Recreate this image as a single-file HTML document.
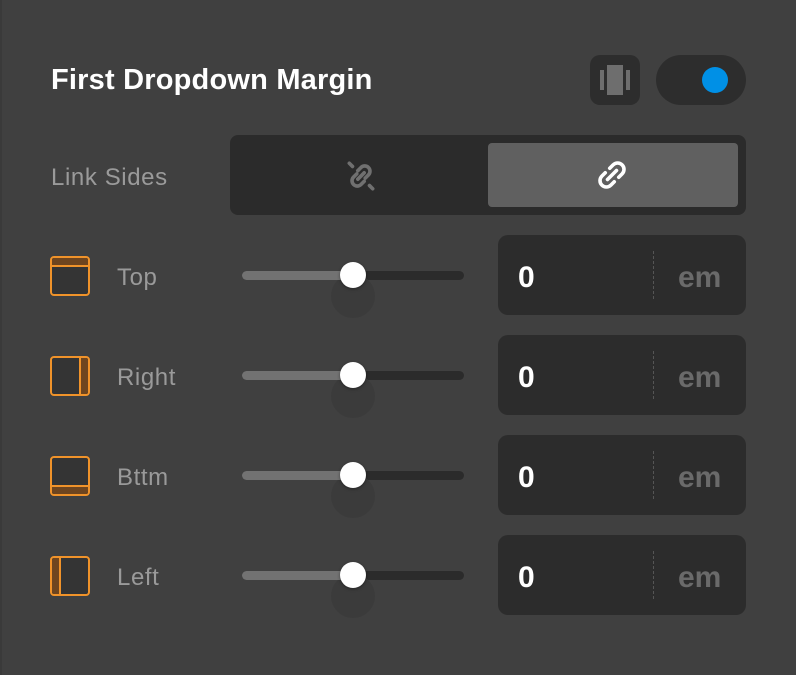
<!DOCTYPE html>
<html><head><style>
*{margin:0;padding:0;box-sizing:border-box}
body{width:796px;height:675px;background:#404040;font-family:"Liberation Sans",sans-serif;position:relative;overflow:hidden}
.a{position:absolute}
.title{left:51px;top:64px;font-size:29px;font-weight:bold;color:#fff;letter-spacing:0.2px}
.lbl{font-size:24px;color:#9a9a9a;letter-spacing:0.6px}
.track{left:242px;width:222px;height:9px;border-radius:5px;background:#2b2b2b}
.fill{left:0;top:0;width:111px;height:9px;border-radius:5px;background:#727272}
.thumb{width:26px;height:26px;border-radius:50%;background:#fff;left:98px;top:-9px;box-shadow:0 1px 3px rgba(0,0,0,.4)}
.halo{width:44px;height:44px;border-radius:50%;background:#3b3b3b;left:89px;top:3px}
.inp{left:498px;width:248px;height:80px;background:#2c2c2c;border-radius:10px}
.inp .v{position:absolute;left:20px;top:26px;font-size:30px;font-weight:bold;color:#fff}
.inp .u{position:absolute;left:180px;top:26px;font-size:30px;font-weight:bold;color:#6a6a6a}
.inp .d{position:absolute;left:155px;top:16px;height:48px;border-left:1px dashed #555}
.ic{position:absolute;left:50px;width:40px;height:40px;border:2.5px solid #f0932a;border-radius:4px;background:#343434;overflow:hidden}
.ic i{position:absolute;background:#6e451f;border-color:#f0932a;border-style:solid;border-width:0}
</style></head><body>
<div class="a" style="left:0;top:0;width:2px;height:675px;background:#3a3a3a"></div>
<div class="a title">First Dropdown Margin</div>
<div class="a" style="left:590px;top:55px;width:50px;height:50px;border-radius:10px;background:#2d2d2d">
<div class="a" style="left:10px;top:15px;width:4px;height:20px;background:#6e6e6e"></div>
<div class="a" style="left:17px;top:10px;width:16px;height:30px;background:#6e6e6e"></div>
<div class="a" style="left:36px;top:15px;width:4px;height:20px;background:#6e6e6e"></div>
</div>
<div class="a" style="left:656px;top:55px;width:90px;height:50px;border-radius:25px;background:#2d2d2d">
<div class="a" style="left:46px;top:12px;width:26px;height:26px;border-radius:50%;background:#0090e6"></div>
</div>
<div class="a lbl" style="left:51px;top:164px">Link Sides</div>
<div class="a" style="left:230px;top:135px;width:516px;height:80px;background:#2b2b2b;border-radius:8px">
<svg class="a" style="left:114px;top:24px" width="34" height="34" viewBox="0 0 32 32" fill="none" stroke="#707070" stroke-width="3.4" stroke-linecap="round"><path d="M5 4l3 3M24 25l3 3M13 11l3-3a4.5 4.5 0 0 1 7 7l-3 3M19 21l-3 3a4.5 4.5 0 0 1-7-7l3-3M13 19l6-6"/></svg>
<div class="a" style="left:258px;top:8px;width:250px;height:64px;background:#606060;border-radius:4px">
<svg class="a" style="left:106px;top:14px" width="36" height="36" viewBox="0 0 32 32" fill="none" stroke="#fff" stroke-width="3.2" stroke-linecap="round"><path d="M14 10l3-3a5 5 0 0 1 8 8l-3 3M18 22l-3 3a5 5 0 0 1-8-8l3-3M12 20l8-8"/></svg>
</div></div>

<div class="ic" style="top:256px"><i style="left:0;top:0;right:0;height:9px;border-bottom-width:2.5px"></i></div>
<div class="a lbl" style="left:117px;top:264px">Top</div>
<div class="ic" style="top:356px"><i style="right:0;top:0;bottom:0;width:9px;border-left-width:2.5px"></i></div>
<div class="a lbl" style="left:117px;top:364px">Right</div>
<div class="ic" style="top:456px"><i style="left:0;bottom:0;right:0;height:9px;border-top-width:2.5px"></i></div>
<div class="a lbl" style="left:117px;top:464px">Bttm</div>
<div class="ic" style="top:556px"><i style="left:0;top:0;bottom:0;width:9px;border-right-width:2.5px"></i></div>
<div class="a lbl" style="left:117px;top:564px">Left</div>

<div class="a track" style="top:271px"><div class="a halo"></div><div class="a fill"></div><div class="a thumb"></div></div>
<div class="a track" style="top:371px"><div class="a halo"></div><div class="a fill"></div><div class="a thumb"></div></div>
<div class="a track" style="top:471px"><div class="a halo"></div><div class="a fill"></div><div class="a thumb"></div></div>
<div class="a track" style="top:571px"><div class="a halo"></div><div class="a fill"></div><div class="a thumb"></div></div>

<div class="a inp" style="top:235px"><span class="v">0</span><span class="d"></span><span class="u">em</span></div>
<div class="a inp" style="top:335px"><span class="v">0</span><span class="d"></span><span class="u">em</span></div>
<div class="a inp" style="top:435px"><span class="v">0</span><span class="d"></span><span class="u">em</span></div>
<div class="a inp" style="top:535px"><span class="v">0</span><span class="d"></span><span class="u">em</span></div>
</body></html>
